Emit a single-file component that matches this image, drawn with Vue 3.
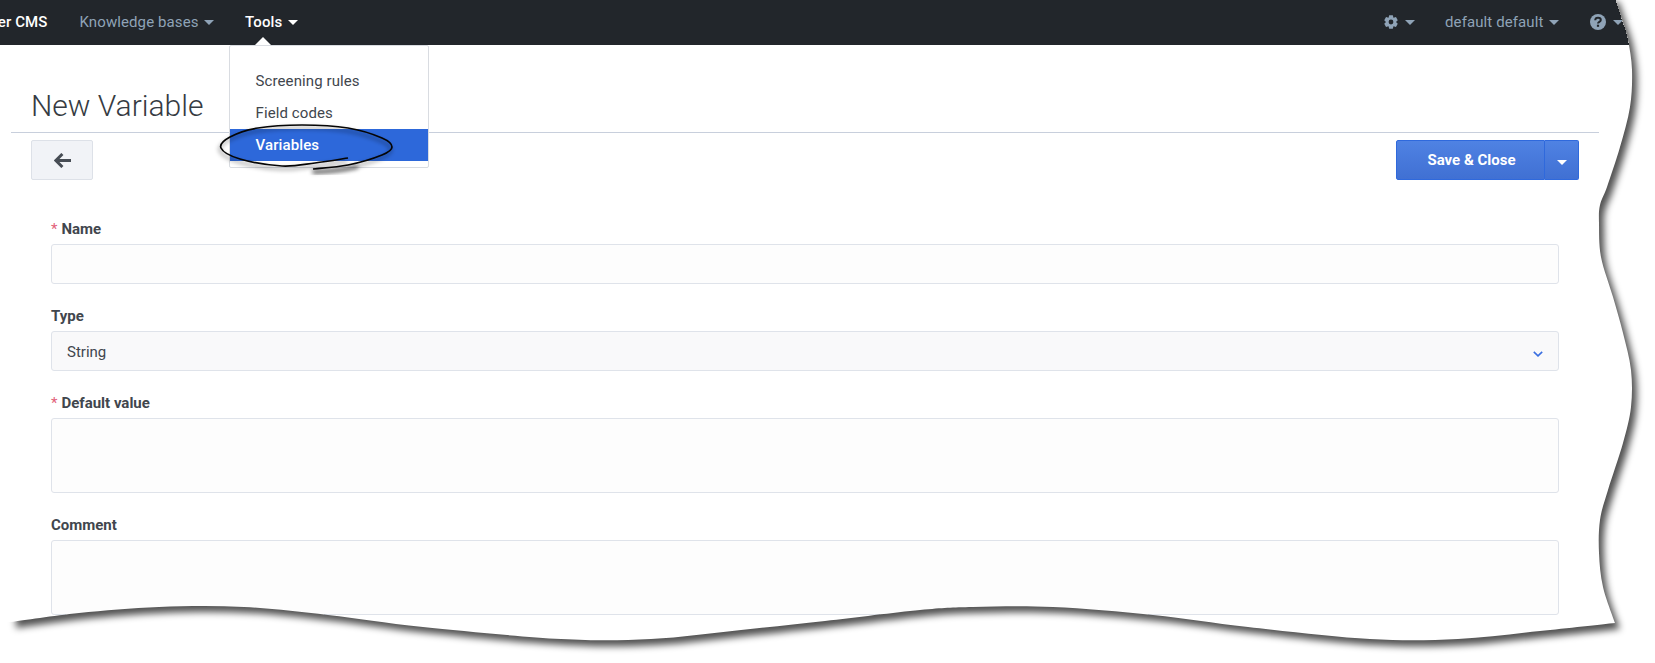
<script setup>
import { computed } from 'vue'

// torn page outline, read off the reference
const rightEdge = [
  [1614, -4], [1622, 20], [1628, 40], [1632, 70], [1630, 107], [1620, 147], [1607, 187], [1600, 205],
  [1599, 223], [1601, 257], [1613, 297], [1623, 333], [1631, 370], [1631, 407], [1623, 443], [1608, 490],
  [1600, 520], [1599, 553], [1603, 587], [1615, 623],
]
const bottomEdge = [
  [1615, 623], [1540, 631], [1458, 639], [1370, 639], [1248, 627], [1153, 615], [1053, 607], [973, 607], [920, 610],
  [825, 621], [741, 630], [651, 639], [561, 639], [423, 627], [328, 615], [244, 607], [159, 607], [79, 613], [11, 622],
]
const ringPoints = [
  [313, 169], [348, 165], [382, 155], [392, 147], [382, 138], [348, 128], [302, 125], [258, 128],
  [230, 137], [221, 148], [240, 159], [282, 166], [315, 163], [348, 158],
]

function smooth(pts) {
  let d = ''
  for (let i = 0; i < pts.length - 1; i++) {
    const p0 = pts[i - 1] || pts[i]
    const p1 = pts[i]
    const p2 = pts[i + 1]
    const p3 = pts[i + 2] || p2
    const c1 = [p1[0] + (p2[0] - p0[0]) / 6, p1[1] + (p2[1] - p0[1]) / 6]
    const c2 = [p2[0] - (p3[0] - p1[0]) / 6, p2[1] - (p3[1] - p1[1]) / 6]
    d += ` C${c1[0]} ${c1[1]} ${c2[0]} ${c2[1]} ${p2[0]} ${p2[1]}`
  }
  return d
}

const tornEdge = `M1614 -4${smooth(rightEdge)}${smooth(bottomEdge)}`
const pagePath = `${tornEdge} L-40 622 L-40 -4 Z`
const shadowPath = `${tornEdge} L11 -4 Z`
const outsidePath = `M-60 -60 H1760 V760 H-60 Z ${pagePath}`
const ringPath = `M313 169${smooth(ringPoints)}`

// six toothed cog
const gearPath = computed(() => {
  const pts = []
  for (let i = 0; i < 6; i++) {
    const a = (i * Math.PI) / 3 - Math.PI / 2
    for (const [r, da] of [[5, -0.5], [7, -0.26], [7, 0.26], [5, 0.5]]) {
      pts.push(`${(7 + r * Math.cos(a + da)).toFixed(2)} ${(7 + r * Math.sin(a + da)).toFixed(2)}`)
    }
  }
  return `M${pts.join('L')}Z M7 4.6a2.4 2.4 0 1 0 0 4.8a2.4 2.4 0 0 0 0-4.8Z`
})

const menuItems = [
  { label: 'Screening rules' },
  { label: 'Field codes' },
  { label: 'Variables', active: true },
]
</script>

<template>
  <div class="page">
    <header class="nav">
      <div class="brand"><span>Knowledge Center CMS</span></div>
      <a class="nav-link first">Knowledge bases<i class="caret"></i></a>
      <a class="nav-link open">Tools<i class="caret"></i>
        <div class="menu">
          <div v-for="m in menuItems" :key="m.label" class="menu-item" :class="{ active: m.active }">{{ m.label }}</div>
        </div>
      </a>
      <div class="spacer"></div>
      <a class="nav-link icon-link">
        <svg width="14" height="14" viewBox="0 0 14 14"><path fill="#8fa3b7" fill-rule="evenodd" :d="gearPath"/></svg>
        <i class="caret"></i>
      </a>
      <a class="nav-link user">default default<i class="caret"></i></a>
      <a class="nav-link icon-link help">
        <svg width="16" height="16" viewBox="0 0 16 16"><circle cx="8" cy="8" r="8" fill="#8fa3b7"/><path fill="none" stroke="#22262b" stroke-width="2" d="M5.2 6.2C5.3 4.6 6.5 3.8 8 3.8c1.6 0 2.8.9 2.8 2.2 0 1.9-2.8 1.9-2.8 3.6"/><rect x="6.9" y="10.7" width="2.2" height="2.1" fill="#22262b"/></svg>
        <i class="caret"></i>
      </a>
    </header>

    <main class="content">
      <h1 class="title">New Variable</h1>
      <div class="toolbar">
        <button class="back-btn" type="button">
          <svg width="17" height="15" viewBox="0 0 17 15"><path fill="none" stroke="#474d55" stroke-width="3" d="M17 7.5H3M8.4 1 1.9 7.5 8.4 14"/></svg>
        </button>
        <div class="save-group">
          <button class="save-btn" type="button">Save &amp; Close</button>
          <button class="save-more" type="button"><i class="caret"></i></button>
        </div>
      </div>

      <form class="form">
        <label class="field-label"><span class="req">*</span>Name</label>
        <div class="input"></div>
        <label class="field-label">Type</label>
        <div class="input select">
          <span>String</span>
          <svg width="10" height="6" viewBox="0 0 10 6"><path fill="none" stroke="#3a6fe0" stroke-width="1.6" d="M.8.8 5 4.8 9.2.8"/></svg>
        </div>
        <label class="field-label"><span class="req">*</span>Default value</label>
        <div class="input area"></div>
        <label class="field-label">Comment</label>
        <div class="input area"></div>
      </form>
    </main>

    <svg class="overlay" width="1655" height="663" viewBox="0 0 1655 663">
      <defs>
        <clipPath id="outsideClip"><path :d="outsidePath" clip-rule="evenodd" /></clipPath>
        <filter id="shadowBlur" x="-5%" y="-5%" width="110%" height="110%"><feGaussianBlur stdDeviation="3.5" /></filter>
        <filter id="inkBlur" x="-10%" y="-50%" width="120%" height="200%"><feGaussianBlur stdDeviation="2" /></filter>
      </defs>
      <!-- hand drawn ring round the menu item -->
      <path :d="ringPath" fill="none" stroke="#000" stroke-opacity=".35" stroke-width="2.5" filter="url(#inkBlur)" transform="translate(-1 3)"/>
      <path d="M313 172C330 172 345 170 358 167" fill="none" stroke="#000" stroke-opacity=".6" stroke-width="3" filter="url(#inkBlur)"/>
      <path :d="ringPath" fill="none" stroke="#050505" stroke-width="1.7"/>
      <!-- white outside the torn page, then its shadow -->
      <path :d="outsidePath" fill="#fff" fill-rule="evenodd" shape-rendering="crispEdges"/>
      <g clip-path="url(#outsideClip)">
        <path :d="shadowPath" fill="#000" fill-opacity=".68" filter="url(#shadowBlur)" transform="translate(5 6)"/>
      </g>
    </svg>
  </div>
</template>

<style>
html, body { margin: 0; background: #fff; }
</style>

<style scoped>
.page {
  position: relative;
  width: 1655px;
  height: 663px;
  overflow: hidden;
  background: #fff;
  font-family: Roboto, "Liberation Sans", sans-serif;
  color: #41464d;
}
.nav {
  display: flex;
  align-items: center;
  height: 45px;
  padding-bottom: 2px;
  box-sizing: border-box;
  background: #22262b;
  font-size: 15px;
  letter-spacing: .1px;
  color: #8fa3b7;
}
.brand {
  width: 47.5px;
  display: flex;
  justify-content: flex-end;
  overflow: hidden;
  white-space: nowrap;
  color: #fff;
  font-weight: 500;
  margin-right: 32px;
}
.nav-link {
  position: relative;
  display: flex;
  align-items: center;
  white-space: nowrap;
  margin-right: 30px;
}
.first { margin-right: 31px; }
.caret {
  display: inline-block;
  width: 0;
  height: 0;
  margin-left: 5.5px;
  margin-top: 2px;
  border-left: 5px solid transparent;
  border-right: 5px solid transparent;
  border-top: 5px solid currentColor;
}
.icon-link .caret { margin-left: 7px; }
.open { color: #fff; font-weight: 500; }
.spacer { flex: 1; }
.icon-link svg { display: block; }
.user { margin-right: 31px; }
.help { margin-right: 0; width: 65px; }
.menu {
  position: absolute;
  left: -16px;
  top: 32px;
  width: 200px;
  height: 123px;
  box-sizing: border-box;
  padding: 19px 0 7px;
  background: #fff;
  border: 1px solid #d9dce1;
  border-radius: 2px;
  font-size: 15px;
  font-weight: 400;
  color: #41464d;
  z-index: 2;
}
.menu::before {
  content: "";
  position: absolute;
  left: 25px;
  top: -9px;
  border-left: 8px solid transparent;
  border-right: 8px solid transparent;
  border-bottom: 8px solid #fff;
}
.menu-item {
  height: 32px;
  line-height: 32px;
  padding-left: 25.5px;
}
.menu-item.active {
  background: #2d68da;
  color: #fff;
  font-weight: 500;
}
.content {
  padding: 0 56px 0 11px;
}
.title {
  margin: 0;
  height: 88px;
  box-sizing: border-box;
  padding: 42px 0 0 20px;
  border-bottom: 1px solid #c8cfdc;
  font-size: 30px;
  font-weight: 300;
  line-height: 38px;
  color: #363b42;
}
.toolbar {
  display: flex;
  justify-content: space-between;
  padding: 7px 20px 0;
}
.back-btn {
  width: 62px;
  height: 40px;
  display: flex;
  align-items: center;
  justify-content: center;
  padding: 0;
  background: #f1f3f7;
  border: 1px solid #dde1e8;
  border-radius: 2px;
}
.save-group {
  display: flex;
  height: 40px;
  color: #fff;
}
.save-btn, .save-more {
  height: 40px;
  padding: 0;
  background: linear-gradient(#4f82e3, #4070d3);
  border: 1px solid #2f69dc;
  color: #fff;
  font-family: inherit;
  font-size: 15px;
  font-weight: 700;
}
.save-btn { width: 149px; padding-left: 2px; border-radius: 2px 0 0 2px; }
.save-more { width: 34px; border-left: 0; border-radius: 0 2px 2px 0; }
.save-more .caret { margin: 0; }
.form {
  display: flex;
  flex-direction: column;
  padding: 0 40px;
  margin-top: 40px;
}
.field-label {
  display: block;
  height: 24px;
  line-height: 18px;
  font-size: 15px;
  font-weight: 700;
  color: #41464d;
}
.req { color: #e2607a; font-weight: 400; margin-right: 4px; }
.input {
  box-sizing: border-box;
  height: 40px;
  margin-bottom: 23px;
  background: #fdfdfd;
  border: 1px solid #dfe3ea;
  border-radius: 3px;
}
.select {
  display: flex;
  align-items: center;
  justify-content: space-between;
  padding: 1px 15px 0;
  background: #f9f9fa;
  font-size: 15px;
}
.select svg { margin-top: 4px; }
.area { height: 75px; }
.overlay {
  position: absolute;
  left: 0;
  top: 0;
  pointer-events: none;
  z-index: 5;
}
</style>
